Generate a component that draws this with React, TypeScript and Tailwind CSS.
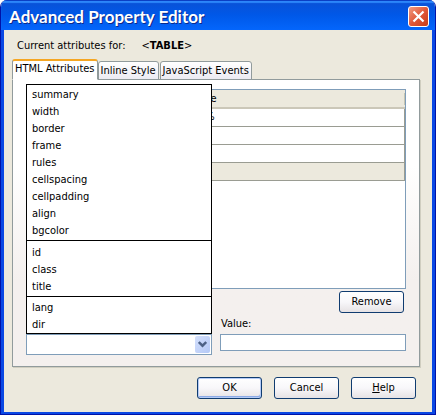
import React, { useState } from 'react';
import clsx from 'clsx';

const TABS = ['HTML Attributes', 'Inline Style', 'JavaScript Events'];

const ATTRIBUTE_GROUPS = [
  ['summary', 'width', 'border', 'frame', 'rules', 'cellspacing', 'cellpadding', 'align', 'bgcolor'],
  ['id', 'class', 'title'],
  ['lang', 'dir'],
];

const ROWS = ['90%', '', '', ''];

interface DialogButtonProps {
  children: React.ReactNode;
  isDefault?: boolean;
}

const DialogButton: React.FC<DialogButtonProps> = ({ children, isDefault }) => (
  <button
    type="button"
    className={clsx(
      'h-[22px] w-[65px] rounded-[3px] border border-[#103c70] bg-linear-to-b from-white via-[#f8f7fa] to-[#e6e2e4]',
      isDefault && 'shadow-[inset_0_0_0_1px_#b4cbf7,inset_-1px_-2px_0_0_#8caae6]'
    )}
  >
    {children}
  </button>
);

const TitleBar: React.FC = () => (
  <header className="flex h-[30px] items-center justify-between bg-linear-to-b from-[#0a50d4] via-[#0058e8] to-[#0466fc] pr-[6px] pl-2 shadow-[inset_0_1px_0_#0b3fc4,inset_0_3px_1px_#2c86fa]">
    <h1 className="pt-1 font-['Lato','Liberation_Sans',sans-serif] text-[17px] leading-5 font-bold text-white [text-shadow:1px_1px_0_#0a2a8c]">
      Advanced Property Editor
    </h1>
    <button
      type="button"
      aria-label="Close"
      className="mt-[3px] flex size-[21px] items-center justify-center rounded-[3px] border border-white bg-linear-to-br from-[#f09a80] via-[#e0583a] to-[#c83c14]"
    >
      <svg width="13" height="13" viewBox="0 0 13 13" stroke="#fff" strokeWidth="2.2">
        <path d="M1.5 1.5 L11.5 11.5 M11.5 1.5 L1.5 11.5" />
      </svg>
    </button>
  </header>
);

const TabStrip: React.FC<{ active: string; onSelect: (tab: string) => void }> = ({ active, onSelect }) => (
  <div role="tablist" className="relative z-10 -mb-px flex h-[21px] items-end">
    {TABS.map((tab) => (
      <button
        key={tab}
        type="button"
        role="tab"
        aria-selected={tab === active}
        onClick={() => onSelect(tab)}
        className={clsx(
          'rounded-t-[3px] border px-[2px] whitespace-nowrap',
          tab === active
            ? 'h-[21px] border-t-2 border-x-[#919b9c] border-t-[#f5a623] border-b-white bg-white pb-1 leading-4'
            : 'mr-px h-[19px] border-[#919b9c] bg-linear-to-b from-white to-[#ecebf2] leading-4'
        )}
      >
        {tab}
      </button>
    ))}
  </div>
);

const AttributeTable: React.FC = () => (
  <div className="h-[200px] border border-[#7f9db9] bg-white">
    <table className="w-full table-fixed border-collapse text-left">
      <colgroup>
        <col className="w-[42%]" />
        <col />
      </colgroup>
      <thead>
        <tr className="h-[18px] border-b-2 border-[#cbc7b8] bg-[#ece9dd]">
          <th aria-label="Name" className="p-0" />
          <th className="p-0 pl-1 font-normal">
            <span className="block h-3 border-r border-[#c6c5b2] leading-3">Value</span>
          </th>
        </tr>
      </thead>
      <tbody>
        {ROWS.map((value, i) => (
          <tr
            key={i}
            className={clsx('h-[18px] border-r border-b border-[#9a9c92]', i === ROWS.length - 1 && 'bg-[#ece9dd]')}
          >
            <td className="p-0" />
            <td className="p-0 pl-[7px] leading-4">{value}</td>
          </tr>
        ))}
      </tbody>
    </table>
  </div>
);

const AttributePicker: React.FC = () => {
  const [attribute, setAttribute] = useState('');

  return (
    <div className="relative">
      <select
        aria-label="Attribute"
        value={attribute}
        onChange={(e) => setAttribute(e.target.value)}
        className="block h-[21px] w-full appearance-none border border-[#7f9db9] bg-white pl-1"
      >
        <option value="" />
        {ATTRIBUTE_GROUPS.flat().map((name) => (
          <option key={name}>{name}</option>
        ))}
      </select>
      <span className="pointer-events-none absolute top-[2px] right-[2px] flex h-[17px] w-[15px] items-center justify-center rounded-[2px] bg-linear-to-br from-[#d4e0fc] to-[#b4c8f6]">
        <svg width="9" height="7" viewBox="0 0 9 7" fill="none" stroke="#4d6185" strokeWidth="2.4">
          <path d="M0.8 1 L4.5 4.7 L8.2 1" />
        </svg>
      </span>
      <div role="listbox" aria-label="Attributes" className="absolute bottom-full left-0 z-20 w-full border border-black bg-white">
        {ATTRIBUTE_GROUPS.map((group) => (
          <ul key={group[0]} className="border-black pt-px not-first:border-t not-first:pt-[3px] last:pt-[2px] not-last:pb-px">
            {group.map((name) => (
              <li
                key={name}
                role="option"
                aria-selected={name === attribute}
                onClick={() => setAttribute(name)}
                className="pl-[5px] leading-[17px]"
              >
                {name}
              </li>
            ))}
          </ul>
        ))}
      </div>
    </div>
  );
};

export default function App() {
  const [activeTab, setActiveTab] = useState(TABS[0]);

  return (
    <div className="flex min-h-screen flex-col overflow-hidden rounded-t-[7px] border-x border-b-2 border-[#0012a8] bg-[#ece9dd] font-['DejaVu_Sans_Condensed','Noto_Sans',sans-serif] text-[11px] text-black">
      <TitleBar />
      <main className="flex-1 border-x-3 border-b-2 border-[#0a48e4] pr-3 pb-[13px] pl-2">
        <p className="flex gap-4 pt-2 pb-[5px] pl-[5px] leading-4">
          <span>Current attributes for:</span>
          <span>
            &lt;<b>TABLE</b>&gt;
          </span>
        </p>
        <TabStrip active={activeTab} onSelect={setActiveTab} />
        <section className="border border-[#919b9c] bg-linear-to-b from-white from-30% to-[#f4f0ee] to-70% px-[13px] pt-[9px] pb-[11px] shadow-[1px_1px_0_#d0cec0]">
          <AttributeTable />
          <div className="flex justify-end pt-[2px] pr-[2px]">
            <DialogButton>Remove</DialogButton>
          </div>
          <div className="grid grid-cols-2 items-end gap-x-2 pt-[3px]">
            <label htmlFor="attribute-value" className="col-start-2 pb-[2px] pl-px leading-4">
              Value:
            </label>
          </div>
          <div className="grid grid-cols-2 items-start gap-x-2">
            <AttributePicker />
            <input id="attribute-value" type="text" className="h-[17px] w-full border border-[#7f9db9] bg-white px-1" />
          </div>
        </section>
        <footer className="flex justify-end gap-3 pt-[10px] pr-1">
          <DialogButton isDefault>OK</DialogButton>
          <DialogButton>Cancel</DialogButton>
          <DialogButton>
            <span className="underline">H</span>elp
          </DialogButton>
        </footer>
      </main>
    </div>
  );
}
